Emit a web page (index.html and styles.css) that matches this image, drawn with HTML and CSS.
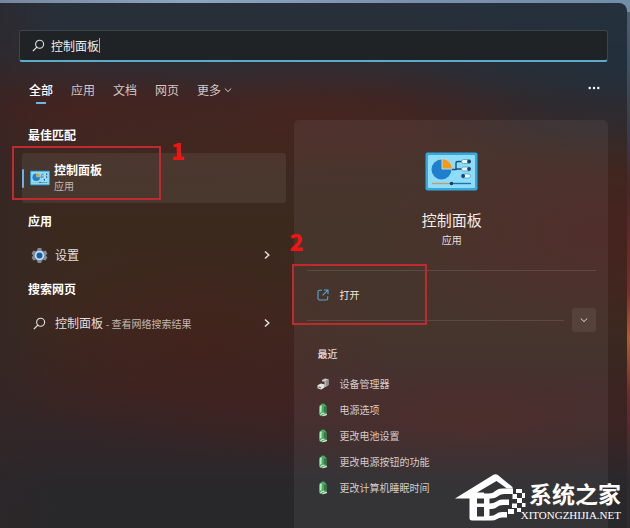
FILE: index.html
```html
<!DOCTYPE html>
<html lang="zh-CN">
<head>
    <meta charset="UTF-8">
    <meta name="viewport" content="width=device-width, initial-scale=1.0">
    <title>控制面板</title>
    <link rel="stylesheet" href="styles.css">
</head>
<body>
    <!-- shared icons -->
    <svg class="sprite" width="0" height="0" aria-hidden="true">
        <symbol id="search" viewBox="0 0 14 14">
            <circle cx="8.2" cy="5.6" r="4.3" fill="none" stroke="currentColor" stroke-width="1.2"/>
            <path d="M5.2 8.7 1.3 12.6" fill="none" stroke="currentColor" stroke-width="1.3" stroke-linecap="round"/>
        </symbol>
        <symbol id="panel" viewBox="0 0 53 39">
            <rect x="0.5" y="0.5" width="52" height="38" rx="2" fill="#35a9dc"/>
            <rect x="3" y="3" width="47" height="33" rx="1" fill="#8fdcf8"/>
            <circle cx="16.5" cy="17.5" r="10" fill="#1f7fcf"/>
            <path d="M17 17V6.5A10.5 10.5 0 0 1 27.5 17Z" fill="#f39a1e" stroke="#a5e2f8" stroke-width="1"/>
            <path d="M27 17.5H31V11Q31 9.5 33 9.5H37M31 17H37" fill="none" stroke="#19507c" stroke-width="1.4"/>
            <g fill="#e9f8ff" stroke="#4f9fc9" stroke-width="0.8">
                <rect x="36.5" y="7.5" width="9" height="4" rx="2"/>
                <rect x="36.5" y="15" width="9" height="4" rx="2"/>
                <rect x="36.5" y="22" width="9" height="4" rx="2"/>
            </g>
            <g fill="#14456e">
                <circle cx="44" cy="9.5" r="1.9"/>
                <circle cx="44" cy="17" r="1.9"/>
                <circle cx="38.2" cy="24" r="1.9"/>
            </g>
            <path d="M7 31.5H25" stroke="#c39a68" stroke-width="1.4"/>
            <path d="M28 31.5H46" stroke="#2273ad" stroke-width="1.4"/>
            <circle cx="26.5" cy="31.5" r="1.8" fill="#153f66"/>
        </symbol>
        <symbol id="right" viewBox="0 0 8 10">
            <path d="M2 1.5 5.8 5 2 8.5" fill="none" stroke="currentColor" stroke-width="1.5"/>
        </symbol>
        <symbol id="down" viewBox="0 0 10 8">
            <path d="M1.8 2.5 5 5.6 8.2 2.5" fill="none" stroke="currentColor" stroke-width="1"/>
        </symbol>
        <symbol id="battery" viewBox="0 0 12 14">
            <path d="M4 1.8Q4 0.6 6 0.6T8 1.8Q9.5 2.2 9.5 4V11Q9.5 13.2 6 13.2T2 11V4Q2 2.2 4 1.8Z" fill="#4aa863"/>
            <path d="M4.3 2.6Q3.6 4 3.7 6V9.5" fill="none" stroke="#b4f0ba" stroke-width="1.8"/>
            <path d="M8 3.5V9.5" stroke="#236b3a" stroke-width="1.4"/>
            <path d="M3.5 12.2Q4.5 9.8 7.5 10.4M5.5 12.6 10 11.4" fill="none" stroke="#d5e6ce" stroke-width="1.1"/>
        </symbol>
    </svg>

    <main class="window">
        <label class="search">
            <svg class="icon-search"><use href="#search"/></svg>
            <input type="text" class="search-input" value="控制面板" aria-label="搜索">
            <span class="caret"></span>
        </label>

        <nav class="tabs">
            <button type="button" class="tab active">全部</button>
            <button type="button" class="tab">应用</button>
            <button type="button" class="tab">文档</button>
            <button type="button" class="tab">网页</button>
            <button type="button" class="tab">更多<svg class="icon-down"><use href="#down"/></svg></button>
            <button type="button" class="more" aria-label="选项">
                <svg width="12" height="4" viewBox="0 0 12 4" fill="#fff"><circle cx="1.7" cy="2" r="1.2"/><circle cx="6" cy="2" r="1.2"/><circle cx="10.3" cy="2" r="1.2"/></svg>
            </button>
        </nav>

        <div class="columns">
            <div class="results">
                <section>
                    <h2>最佳匹配</h2>
                    <button type="button" class="best">
                        <svg class="icon-best"><use href="#panel"/></svg>
                        <span class="best-text">
                            <b>控制面板</b>
                            <small>应用</small>
                        </span>
                        <span class="mark mark-one"></span>
                        <span class="number number-one">1</span>
                    </button>
                </section>
                <section>
                    <h2>应用</h2>
                    <button type="button" class="row">
                        <svg class="icon-row" viewBox="0 0 17 17">
                            <path d="M6.7 1H10.3L10.8 3.2 12.5 4.2 14.6 3.5 16.4 6.5 14.8 8.5 16.4 10.5 14.6 13.5 12.5 12.8 10.8 13.8 10.3 16H6.7L6.2 13.8 4.5 12.8 2.4 13.5 0.6 10.5 2.2 8.5 0.6 6.5 2.4 3.5 4.5 4.2 6.2 3.2Z" fill="#7e8b99"/>
                            <circle cx="8.5" cy="8.5" r="4.7" fill="#c6def2"/>
                            <circle cx="8.5" cy="8.5" r="3" fill="#155da5"/>
                        </svg>
                        <span>设置</span>
                        <svg class="icon-right"><use href="#right"/></svg>
                    </button>
                </section>
                <section>
                    <h2>搜索网页</h2>
                    <button type="button" class="row">
                        <svg class="icon-row icon-web"><use href="#search"/></svg>
                        <span>控制面板 <small>- 查看网络搜索结果</small></span>
                        <svg class="icon-right"><use href="#right"/></svg>
                    </button>
                </section>
            </div>

            <div class="detail">
                <svg class="icon-large"><use href="#panel"/></svg>
                <h1>控制面板</h1>
                <p class="kind">应用</p>
                <div class="actions">
                    <button type="button" class="item open">
                        <svg class="icon-item" viewBox="0 0 12 12" fill="none" stroke="#52a8d8" stroke-width="1.1">
                            <path d="M5 1.3H2.5Q1 1.3 1 2.8V9.5Q1 11 2.5 11H9.2Q10.7 11 10.7 9.5V7.2M7 1H11V5M10.8 1.2 5.6 6.4"/>
                        </svg>
                        打开
                    </button>
                    <span class="mark mark-two"></span>
                    <span class="number number-two">2</span>
                </div>
                <div class="expand">
                    <span class="line"></span>
                    <button type="button" class="expand-button" aria-label="展开"><svg class="icon-down"><use href="#down"/></svg></button>
                </div>
                <h3>最近</h3>
                <ul class="recent">
                    <li><button type="button" class="item">
                        <svg class="icon-item" viewBox="0 0 12 12">
                            <path d="M5 2 8 0.6 11.5 1.3V7L8.7 9 7.5 8.3V3.6L5 3.4Z" fill="#c9cbc4"/>
                            <path d="M8.6 2.8 11.5 1.3V7L8.7 9Z" fill="#8d928b"/>
                            <path d="M0.5 7.2 4 5.6 7.6 6.4V9.6L4.2 11.5 0.5 10.3Z" fill="#e4e5df"/>
                            <path d="M1.3 8.4 4 9.2V10.3L1.3 9.5Z" fill="#555a56"/>
                        </svg>
                        设备管理器</button></li>
                    <li><button type="button" class="item"><svg class="icon-item"><use href="#battery"/></svg>电源选项</button></li>
                    <li><button type="button" class="item"><svg class="icon-item"><use href="#battery"/></svg>更改电池设置</button></li>
                    <li><button type="button" class="item"><svg class="icon-item"><use href="#battery"/></svg>更改电源按钮的功能</button></li>
                    <li><button type="button" class="item"><svg class="icon-item"><use href="#battery"/></svg>更改计算机睡眠时间</button></li>
                </ul>
            </div>
        </div>
    </main>

    <div class="watermark">
        <svg class="house" viewBox="0 0 71 47" fill="#fff">
            <path d="M0 24.5 38.5 0.8Q40.5-0.5 42.5 0.8L57.5 13V14.5H52L41.5 7 22 18.5 29 18.5V24.5H22V29.5H29.5V33H22V42.5H29.5V46.5H17Q14.5 46.5 14.5 44V24.5Z"/>
            <path d="M29 19.5H34Q38 19.5 41 16.5 43 14.5 47 14.5H58V20H49Q45 20 42.5 22.5 40 24.5 36 24.5H34.5V29.5Q39 29.5 41.5 27.5 44 25.5 47 25.5H54V31H48Q44 31 42 33 40 35 34.5 35V42Q39 42 41 40 43 38 47 38H52V43.5H47Q44 43.5 42 45 40 46.5 36 46.5H29Z"/>
            <path d="M61 15H67V19H61ZM57.5 20H62V25H57.5ZM67 19H70V24H67ZM62 24H67V29H62ZM57 29.5H62V34H57ZM67 29H70.5V33H67ZM53 35H59V40H53ZM62 34H66V38H62Z"/>
        </svg>
        <div class="site">
            <strong>系统之家</strong>
            <span>XITONGZHIJIA.NET</span>
        </div>
    </div>
</body>
</html>
```

FILE: styles.css
```css
* {
    box-sizing: border-box;
}
body {
    margin: 0;
    padding: 3px 3px 0 0;
    min-height: 100vh;
    display: flex;
    font-family: "Noto Sans CJK SC", sans-serif;
    font-size: 12px;
    line-height: 20px;
    color: #e6dfdc;
    background:
        linear-gradient(90deg, #77869f, #8fa5bf 30%, #7c8faf 65%, #718fa9) top / 100% 12px no-repeat,
        linear-gradient(#4c6279 0, #343d4d 25%, #4a2529 36%, #7b2c28 55%, #b45d2e 64%, #6d2a2a 75%, #302b32 90%);
}
h1, h2, h3, p, ul {
    margin: 0;
    padding: 0;
}
button {
    font: inherit;
    color: inherit;
    background: none;
    border: none;
    padding: 0;
    cursor: pointer;
}
svg {
    display: block;
    flex: none;
}
small {
    font-size: 10px;
    color: #c5b9b4;
}
.sprite {
    position: absolute;
}

/* window */
.window {
    flex: 1;
    display: flex;
    flex-direction: column;
    padding: 27px 19px 0 19px;
    border-radius: 0 8px 0 0;
    background:
        radial-gradient(ellipse 40% 12% at 48% 22%, rgba(85, 34, 25, 0.4), transparent),
        radial-gradient(ellipse 26% 11% at 10% 20%, rgba(80, 31, 25, 0.4), transparent),
        radial-gradient(ellipse 40% 20% at 100% 12%, rgba(31, 48, 62, 0.8), transparent),
        radial-gradient(ellipse 34% 20% at 95% 44%, rgba(78, 30, 30, 0.6), transparent),
        radial-gradient(ellipse 50% 11% at 75% 80%, rgba(76, 30, 25, 0.55), transparent),
        radial-gradient(ellipse 30% 22% at 32% 66%, rgba(74, 30, 26, 0.5), transparent),
        linear-gradient(90deg, rgba(48, 38, 40, 0.5), transparent 10%),
        linear-gradient(#27303a 0, #2a2e37 10%, #3a2625 19%, #3d2820 28%, #3b291e 42%, #3b291f 62%, #392523 74%, #302629 84%, #28282b 93%, #28282a);
}

/* search box */
.search {
    display: flex;
    align-items: center;
    height: 32px;
    padding-left: 12px;
    background: #202325;
    border: 1px solid #3d4548;
    border-bottom: 2px solid #5dabc8;
    border-radius: 3px;
}
.icon-search {
    width: 13px;
    height: 13px;
    margin-right: 6px;
}
.search-input {
    width: 4em;
    padding: 0;
    border: none;
    outline: none;
    background: none;
    font: inherit;
    color: #eeeeee;
}
.caret {
    width: 1px;
    height: 15px;
    background: #aaaaaa;
}

/* tabs */
.tabs {
    display: flex;
    align-items: center;
    gap: 18px;
    margin-top: 18px;
    padding: 0 8px 0 10px;
}
.tab {
    display: flex;
    align-items: center;
    height: 24px;
    padding-bottom: 4px;
    color: #d5c7c5;
}
.tab .icon-down {
    margin-left: 2px;
}
.tab.active {
    color: #ffffff;
    font-weight: 500;
    background: linear-gradient(#6bb8e8, #6bb8e8) bottom / 10px 2px no-repeat;
}
.more {
    margin-left: auto;
    padding-bottom: 8px;
}
.icon-down {
    width: 10px;
    height: 8px;
}

/* columns */
.columns {
    flex: 1;
    display: grid;
    grid-template-columns: 264fr 313fr;
    gap: 8px;
    margin-top: 16px;
    padding-left: 3px;
}
.results {
    display: flex;
    flex-direction: column;
    gap: 8px;
    padding-top: 5px;
}
h2 {
    margin: 0 0 8px 6px;
    font-size: 12px;
    font-weight: 700;
    color: #ffffff;
}
.best,
.row {
    display: flex;
    align-items: center;
    width: 100%;
    text-align: left;
}
.best {
    position: relative;
    height: 50px;
    border-radius: 3px;
    background: rgba(255, 255, 255, 0.07);
}
.best::before {
    content: "";
    width: 2px;
    height: 19px;
    border-radius: 1px;
    background: #64b5e6;
}
.icon-best {
    width: 20px;
    height: 16px;
    margin: 0 4px 0 6px;
}
.best-text {
    display: flex;
    flex-direction: column;
    line-height: 16px;
}
.best-text b {
    color: #ffffff;
}
.row {
    height: 32px;
    padding: 0 15px 0 9px;
}
.icon-row {
    width: 17px;
    height: 17px;
    margin-right: 7px;
}
.icon-web {
    padding: 2px;
}
.icon-right {
    width: 8px;
    height: 10px;
    margin-left: auto;
}

/* detail panel */
.detail {
    padding: 32px 12px 20px 13px;
    border-radius: 5px 5px 0 0;
    background: rgba(255, 255, 255, 0.06);
}
.icon-large {
    width: 53px;
    height: 39px;
    margin: 0 auto;
}
h1 {
    margin-top: 18px;
    font-size: 15px;
    font-weight: 400;
    line-height: 22px;
    text-align: center;
    color: #f3ecea;
}
.kind {
    font-size: 10px;
    line-height: 18px;
    text-align: center;
}
.actions {
    position: relative;
    margin-top: 21px;
    padding-top: 11px;
    border-top: 1px solid #5c4a42;
}
.item {
    display: flex;
    align-items: center;
    width: 100%;
    height: 26px;
    padding-left: 10px;
    font-size: 10px;
    color: #d6ccc8;
}
.open {
    color: #f0e8e4;
}
.icon-item {
    width: 12px;
    height: 12px;
    margin-right: 10px;
}
.expand {
    display: flex;
    align-items: center;
    gap: 8px;
}
.line {
    flex: 1;
    border-top: 1px solid #5c4a42;
}
.expand-button {
    display: grid;
    place-items: center;
    width: 24px;
    height: 24px;
    border-radius: 3px;
    background: rgba(255, 255, 255, 0.07);
}
h3 {
    margin: 12px 0 7px 10px;
    font-size: 10px;
    font-weight: 500;
}
.recent {
    list-style: none;
}
.recent .icon-item {
    height: 14px;
}

/* numbered steps */
.mark {
    position: absolute;
    border: 2px solid #bf2a31;
    pointer-events: none;
}
.mark-one {
    left: -10px;
    top: -7px;
    width: 149px;
    height: 54px;
}
.mark-two {
    left: -15px;
    top: -7px;
    width: 135px;
    height: 61px;
}
.number {
    position: absolute;
    font-size: 23px;
    font-weight: 900;
    line-height: 22px;
    color: #f01414;
}
.number-one {
    left: 149px;
    top: -14px;
}
.number-two {
    left: -18px;
    top: -41px;
}

/* watermark */
.watermark {
    position: absolute;
    right: 9px;
    bottom: 7px;
    display: flex;
    align-items: flex-end;
    color: #ffffff;
}
.house {
    width: 71px;
    height: 47px;
    margin-right: -5px;
}
.site {
    display: flex;
    flex-direction: column;
    align-items: flex-end;
}
.site strong {
    font-size: 23px;
    line-height: 34px;
}
.site span {
    font-family: "Liberation Serif", serif;
    font-size: 11px;
    line-height: 11px;
}
```
